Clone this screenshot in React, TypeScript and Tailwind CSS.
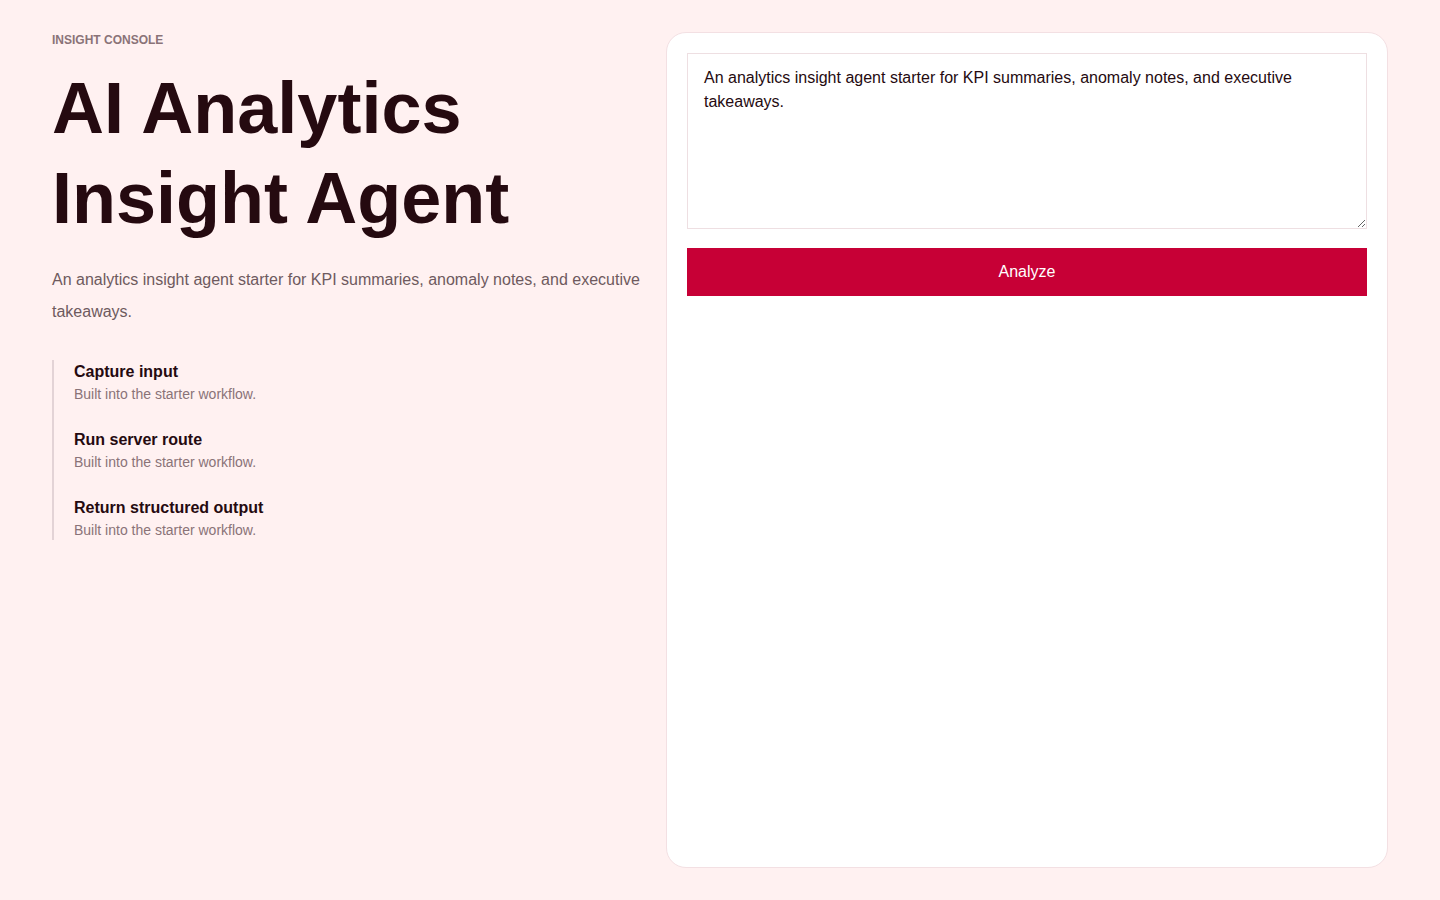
import React from "react";

const steps = ["Capture input", "Run server route", "Return structured output"];

export default function App() {
  return (
    <div
      className="min-h-screen bg-[#fff1f1] text-[#250a10]"
      style={{ fontFamily: '"Liberation Sans", Arial, sans-serif' }}
    >
      <div className="grid h-screen grid-cols-[590px_1fr] gap-[24px] px-[52px] py-[32px]">
        <div className="flex flex-col">
          <div className="text-[12px] font-bold uppercase leading-[16px] text-[#8a7378]">
            Insight Console
          </div>
          <h1 className="mt-[15px] text-[72px] font-bold leading-[90px] text-[#250a10]">
            AI Analytics
            <br />
            Insight Agent
          </h1>
          <p className="mt-[21px] w-[600px] text-[16px] leading-[32px] text-[#6e5a5e]">
            An analytics insight agent starter for KPI summaries, anomaly notes, and executive takeaways.
          </p>
          <div className="mt-[32px] flex flex-col gap-[24px] border-l-2 border-[#e3d3d6] pl-[20px]">
            {steps.map((s) => (
              <div key={s} className="flex flex-col">
                <div className="mt-[1px] text-[16px] font-bold leading-[22px] text-[#250a10]">{s}</div>
                <div className="mt-[1px] text-[14px] leading-[20px] text-[#8a7378]">
                  Built into the starter workflow.
                </div>
              </div>
            ))}
          </div>
        </div>
        <div className="flex flex-col rounded-[20px] border border-[#f3e0e3] bg-white p-[20px]">
          <textarea
            className="h-[176px] w-full border border-[#eedfe2] bg-white px-[16px] py-[12px] text-[16px] leading-[24px] text-[#250a10] outline-none"
            style={{ fontFamily: '"Liberation Sans", Arial, sans-serif' }}
            defaultValue="An analytics insight agent starter for KPI summaries, anomaly notes, and executive takeaways."
          />
          <button
            className="mt-[19px] h-[48px] w-full bg-[#c70036] text-[16px] text-white"
            style={{ fontFamily: '"Liberation Sans", Arial, sans-serif' }}
          >
            Analyze
          </button>
        </div>
      </div>
    </div>
  );
}
